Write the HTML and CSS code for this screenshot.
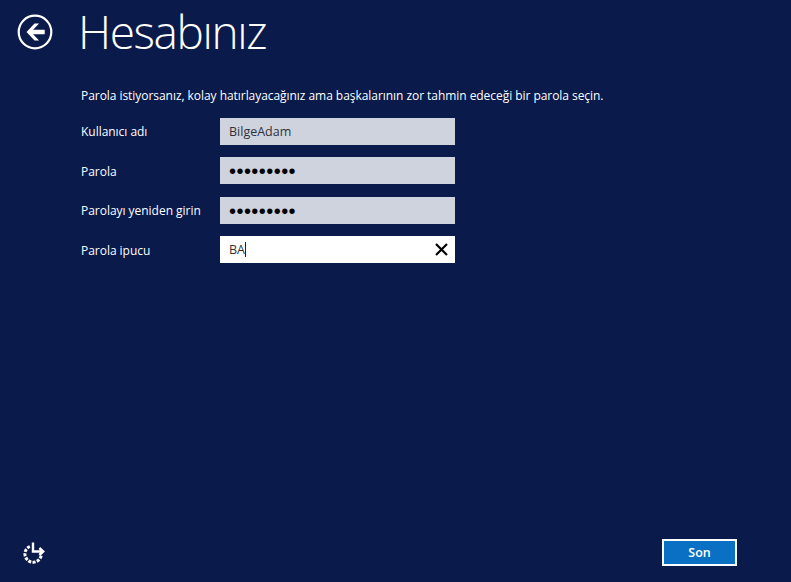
FILE: index.html
```html
<!DOCTYPE html>
<html lang="tr">
<head>
<meta charset="utf-8">
<title>Hesabınız</title>
<link rel="stylesheet" href="styles.css">
</head>
<body>
<main class="page">
  <header class="header">
    <svg class="back" width="36" height="36" viewBox="0 0 36 36" aria-hidden="true">
      <circle cx="18" cy="18" r="16.3" fill="none" stroke="#fff" stroke-width="2.2"/>
      <path d="M17.5 9.500 9.500 18l8 8.500h4.600l-6-6.300h11.600v-4.400H16.100l6-6.300z" fill="#fff"/>
    </svg>
    <h1 class="title">Hesabınız</h1>
  </header>
  <section class="content">
    <p class="intro">Parola istiyorsanız, kolay hatırlayacağınız ama başkalarının zor tahmin edeceği bir parola seçin.</p>
    <div class="form">
      <label class="label">Kullanıcı adı</label>
      <div class="field">BilgeAdam</div>
      <label class="label">Parola</label>
      <div class="field dots"><span class="dot-text">•••••••••</span></div>
      <label class="label">Parolayı yeniden girin</label>
      <div class="field dots"><span class="dot-text">•••••••••</span></div>
      <label class="label">Parola ipucu</label>
      <div class="field active"><span class="value">BA</span><span class="caret"></span>
        <svg class="clear" width="13" height="13" viewBox="0 0 13 13" aria-hidden="true">
          <path d="M1 1l11 11M12 1 1 12" stroke="#000" stroke-width="2.2" fill="none"/>
        </svg>
      </div>
    </div>
  </section>
  <footer class="footer">
    <svg class="ease" width="24" height="24" viewBox="0 0 24 24" aria-hidden="true">
      <path d="M7.800 5.500A8.200 8.200 0 1 0 19.200 14.500" fill="none" stroke="#fff" stroke-width="3" stroke-dasharray="3 1.300"/>
      <path d="M11 1.500v9h10M17.400 7l3.800 3.500-3.800 3.500" fill="none" stroke="#fff" stroke-width="2.400"/>
    </svg>
    <button class="next" type="button">Son</button>
  </footer>
</main>
</body>
</html>
```
FILE: styles.css
```css
html, body {
  margin: 0;
  padding: 0;
  height: 100%;
  background: #0a1a4b;
}
.page {
  box-sizing: border-box;
  width: 791px;
  height: 582px;
  display: flex;
  flex-direction: column;
  overflow: hidden;
  color: #fff;
  font-family: "Open Sans", "Noto Sans", sans-serif;
}
.header {
  display: flex;
  align-items: center;
  height: 64px;
  padding-left: 17px;
  gap: 25px;
}
.back { flex: none; }
.title {
  margin: -3px 0 0;
  font-size: 46px;
  font-weight: 300;
  line-height: 64px;
  letter-spacing: -1.4px;
}
.content {
  flex: 1;
  padding: 23px 0 0 81px;
}
.intro {
  margin: 0 0 13.900px;
  font-size: 12px;
  line-height: 17px;
  letter-spacing: -0.05px;
}
.form {
  display: grid;
  grid-template-columns: 139px 235px;
  grid-auto-rows: 27px;
  row-gap: 12.500px;
  align-items: center;
}
.label {
  font-size: 12px;
  padding-top: 0.400px;
  letter-spacing: -0.03px;
}
.field {
  height: 27px;
  box-sizing: border-box;
  display: flex;
  align-items: center;
  padding-left: 9px;
  background: #cfd3dd;
  color: #2e323c;
  font-size: 12.500px;
}
.dots {
  color: #000;
  font-family: "Liberation Sans", sans-serif;
  font-size: 20px;
  letter-spacing: 0.450px;
}
.dot-text {
  position: relative;
  top: 1px;
}
.active {
  background: #fff;
  color: #333;
  position: relative;
}
.caret {
  width: 1px;
  height: 15px;
  background: #222;
}
.clear {
  position: absolute;
  right: 7px;
  top: 7px;
}
.footer {
  display: flex;
  align-items: center;
  justify-content: space-between;
  height: 27px;
  padding: 0 54px 16px 22px;
}
.next {
  box-sizing: border-box;
  width: 75px;
  height: 27px;
  padding: 0;
  border: 2px solid #fff;
  background: #0a70c4;
  color: #fff;
  font: 600 12.500px "Open Sans", "Noto Sans", sans-serif;
}
```
